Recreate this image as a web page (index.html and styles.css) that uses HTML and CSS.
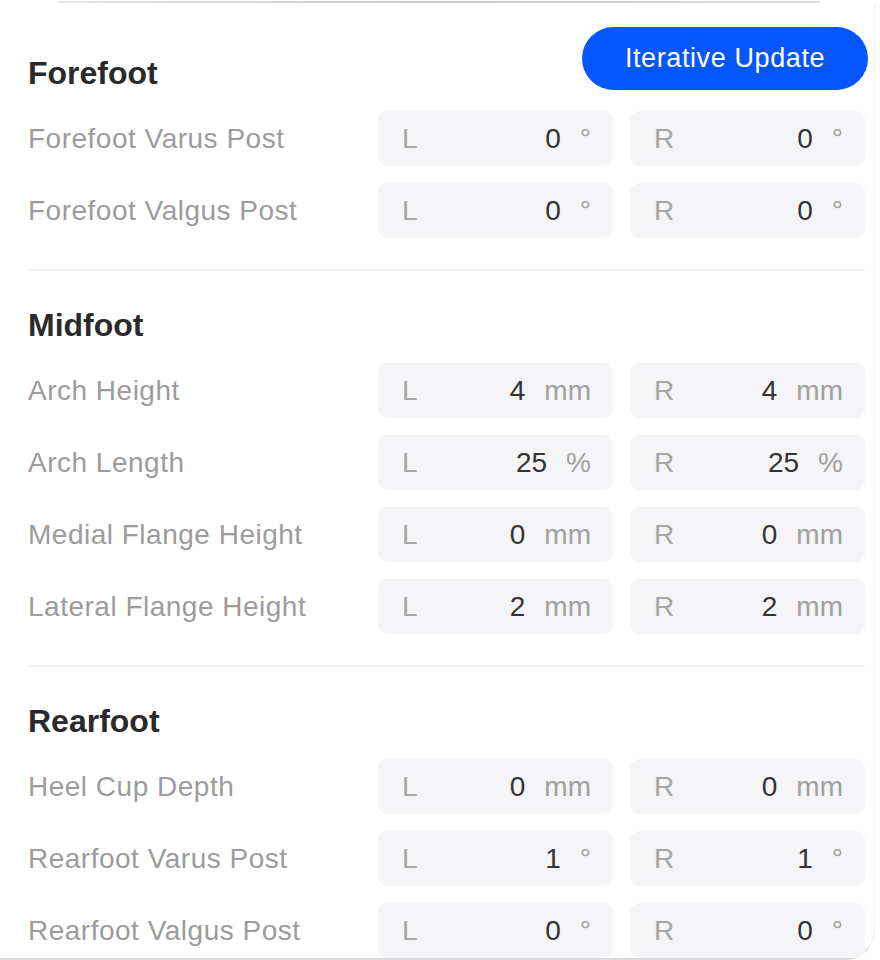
FILE: index.html
```html
<!DOCTYPE html>
<html lang="en">
<head>
    <meta charset="UTF-8">
    <meta name="viewport" content="width=device-width, initial-scale=1.0">
    <title>Orthotic Parameters</title>
    <link rel="stylesheet" href="styles.css">
</head>
<body>
    <div class="top-edge"></div>
    <div class="card">

        <!-- Forefoot -->
        <div class="section first">
            <div class="section-header">
                <h2>Forefoot</h2>
                <button class="update-btn">Iterative Update</button>
            </div>
            <div class="param-list">
                <div class="param-row">
                    <span class="param-label">Forefoot Varus Post</span>
                    <div class="side-box"><span class="side">L</span><span class="val">0</span><span class="unit">°</span></div>
                    <div class="side-box"><span class="side">R</span><span class="val">0</span><span class="unit">°</span></div>
                </div>
                <div class="param-row">
                    <span class="param-label">Forefoot Valgus Post</span>
                    <div class="side-box"><span class="side">L</span><span class="val">0</span><span class="unit">°</span></div>
                    <div class="side-box"><span class="side">R</span><span class="val">0</span><span class="unit">°</span></div>
                </div>
            </div>
        </div>

        <!-- Midfoot -->
        <div class="section">
            <div class="section-header">
                <h2>Midfoot</h2>
            </div>
            <div class="param-list">
                <div class="param-row">
                    <span class="param-label">Arch Height</span>
                    <div class="side-box"><span class="side">L</span><span class="val">4</span><span class="unit">mm</span></div>
                    <div class="side-box"><span class="side">R</span><span class="val">4</span><span class="unit">mm</span></div>
                </div>
                <div class="param-row">
                    <span class="param-label">Arch Length</span>
                    <div class="side-box"><span class="side">L</span><span class="val">25</span><span class="unit">%</span></div>
                    <div class="side-box"><span class="side">R</span><span class="val">25</span><span class="unit">%</span></div>
                </div>
                <div class="param-row">
                    <span class="param-label">Medial Flange Height</span>
                    <div class="side-box"><span class="side">L</span><span class="val">0</span><span class="unit">mm</span></div>
                    <div class="side-box"><span class="side">R</span><span class="val">0</span><span class="unit">mm</span></div>
                </div>
                <div class="param-row">
                    <span class="param-label">Lateral Flange Height</span>
                    <div class="side-box"><span class="side">L</span><span class="val">2</span><span class="unit">mm</span></div>
                    <div class="side-box"><span class="side">R</span><span class="val">2</span><span class="unit">mm</span></div>
                </div>
            </div>
        </div>

        <!-- Rearfoot -->
        <div class="section last">
            <div class="section-header">
                <h2>Rearfoot</h2>
            </div>
            <div class="param-list">
                <div class="param-row">
                    <span class="param-label">Heel Cup Depth</span>
                    <div class="side-box"><span class="side">L</span><span class="val">0</span><span class="unit">mm</span></div>
                    <div class="side-box"><span class="side">R</span><span class="val">0</span><span class="unit">mm</span></div>
                </div>
                <div class="param-row">
                    <span class="param-label">Rearfoot Varus Post</span>
                    <div class="side-box"><span class="side">L</span><span class="val">1</span><span class="unit">°</span></div>
                    <div class="side-box"><span class="side">R</span><span class="val">1</span><span class="unit">°</span></div>
                </div>
                <div class="param-row">
                    <span class="param-label">Rearfoot Valgus Post</span>
                    <div class="side-box"><span class="side">L</span><span class="val">0</span><span class="unit">°</span></div>
                    <div class="side-box"><span class="side">R</span><span class="val">0</span><span class="unit">°</span></div>
                </div>
            </div>
        </div>
    </div>
</body>
</html>
```

FILE: styles.css
```css
body {
    margin: 0;
    background-color: #fff;
    font-family: "Liberation Sans", Arial, sans-serif;
    color: #333;
    height: 960px;
    overflow: hidden;
}
.top-edge {
    height: 2px;
    margin: 1px 60px 0 58px;
    background: linear-gradient(to right, #e4e4ea, #c9c9d2 50%, #dcdce2);
}
.card {
    width: 837px;
    padding: 0 9px 0 28px;
    border-right: 1px solid #efeff1;
    border-bottom: 2px solid #dcdce0;
    border-bottom-right-radius: 30px;
}
.section {
    padding: 32px 0 31px;
    border-bottom: 2px solid #f4f4f6;
}
.section.first {
    padding-top: 24px;
}
.section.last {
    padding-bottom: 0;
    border-bottom: none;
}
.section-header {
    display: flex;
    justify-content: space-between;
    align-items: flex-end;
    margin-bottom: 16px;
}
.section-header h2 {
    margin: 0;
    font-size: 32px;
    line-height: 44px;
    font-weight: 600;
    color: #2a2a2a;
}
.update-btn {
    height: 63px;
    width: 286px;
    margin: 0 -3px 5px 0;
    border: none;
    border-radius: 32px;
    background-color: #0656ff;
    color: #fff;
    font-family: "Liberation Sans", Arial, sans-serif;
    font-size: 27px;
    letter-spacing: 0.6px;
}
.param-list {
    display: grid;
    row-gap: 17px;
}
.param-row {
    display: grid;
    grid-template-columns: 1fr 235px 235px;
    column-gap: 17px;
    align-items: center;
}
.param-label {
    font-size: 28px;
    letter-spacing: 0.5px;
    color: #9c9c9c;
}
.side-box {
    display: flex;
    align-items: center;
    height: 55px;
    padding: 0 22px 0 24px;
    background-color: #f5f4f7;
    border-radius: 9px;
    font-size: 28px;
}
.side {
    color: #a6a6a6;
}
.val {
    margin-left: auto;
    margin-right: 19px;
    color: #333;
}
.unit {
    color: #a0a0a0;
}
```
